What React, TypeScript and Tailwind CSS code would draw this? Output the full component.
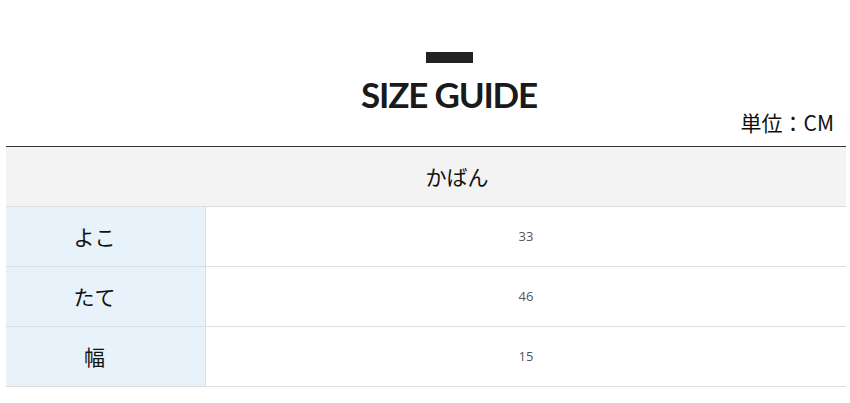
import React from "react"

const rows = [
  { label: "よこ", value: "33" },
  { label: "たて", value: "46" },
  { label: "幅", value: "15" },
]

export default function App() {
  return (
    <div className="w-[850px] h-[403px] bg-white font-['Noto_Sans_CJK_JP',sans-serif] text-[#111]">
      {/* Heading */}
      <div className="pt-[52px] flex flex-col items-center pl-[48px]">
        <div className="h-[11px] w-[47px] bg-[#222]" />
        <h1 className="mt-[13px] font-['Lato',sans-serif] font-bold text-[35px] leading-[36px] tracking-[-1.2px] text-[#1a1a1a]">
          SIZE GUIDE
        </h1>
      </div>
      <div className="flex justify-end pr-[16px] -mt-[5px] h-[30px] items-center">
        <span className="text-[21px] leading-none">単位：CM</span>
      </div>

      {/* Table */}
      <div className="mx-[6px] mt-[9px] w-[840px] border-t border-[#333]">
        <div className="h-[60px] bg-[#f3f3f3] border-b border-[#ddd] flex items-center justify-center pl-[62px] text-[21px]">
          かばん
        </div>
        {rows.map((row) => (
          <div key={row.label} className="flex h-[60px] border-b border-[#ddd]">
            <div className="w-[200px] bg-[#e8f2fb] border-r border-[#ddd] flex items-center justify-center pr-[22px] text-[21px]">
              {row.label}
            </div>
            <div className="flex-1 flex items-center justify-center font-['Open_Sans',sans-serif] text-[13px] text-[#555]">
              {row.value}
            </div>
          </div>
        ))}
      </div>
    </div>
  )
}
